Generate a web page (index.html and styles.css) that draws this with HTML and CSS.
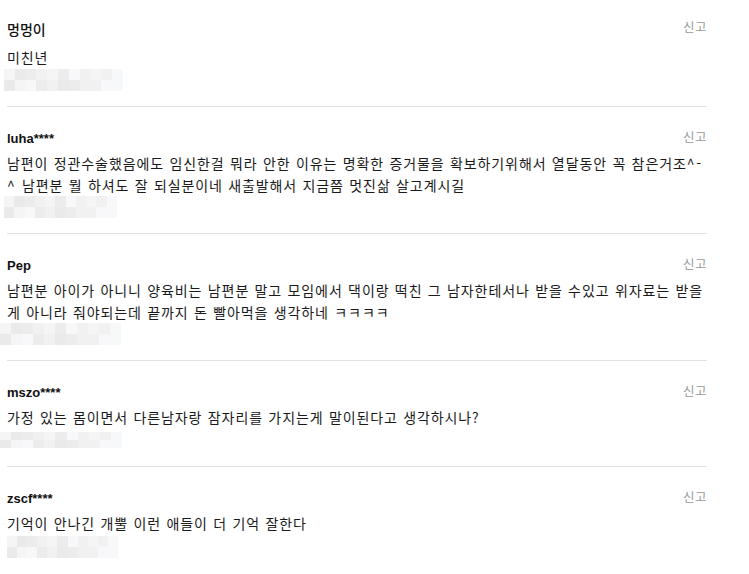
FILE: index.html
```html
<!DOCTYPE html>
<html lang="ko">
<head>
<meta charset="utf-8">
<title>댓글</title>
<link rel="stylesheet" href="styles.css">
</head>
<body>
<ul class="comments">
  <li class="comment first">
    <div class="head"><strong class="author">멍멍이</strong><button class="report">신고</button></div>
    <p class="text">미친년</p>
    <div class="mosaic m1"><span></span><span></span><span></span><span></span><span></span><span></span><span></span><span></span><span></span><span></span><span></span><span></span><span></span><span></span><span></span><span></span><span></span><span></span><span></span><span></span><span></span><span></span></div>
  </li>
  <li class="comment">
    <div class="head"><strong class="author">luha****</strong><button class="report">신고</button></div>
    <p class="text">남편이 정관수술했음에도 임신한걸 뭐라 안한 이유는 명확한 증거물을 확보하기위해서 열달동안 꼭 참은거조<span class="emo">^-^</span> 남편분 뭘 하셔도 잘 되실분이네 새출발해서 지금쯤 멋진삶 살고계시길</p>
    <div class="mosaic m2"><span></span><span></span><span></span><span></span><span></span><span></span><span></span><span></span><span></span><span></span><span></span><span></span><span></span><span></span><span></span><span></span><span></span><span></span><span></span><span></span><span></span><span></span></div>
  </li>
  <li class="comment">
    <div class="head"><strong class="author">Pep</strong><button class="report">신고</button></div>
    <p class="text">남편분 아이가 아니니 양육비는 남편분 말고 모임에서 댁이랑 떡친 그 남자한테서나 받을 수있고 위자료는 받을 게 아니라 줘야되는데 끝까지 돈 빨아먹을 생각하네 ㅋㅋㅋㅋ</p>
    <div class="mosaic m3"><span></span><span></span><span></span><span></span><span></span><span></span><span></span><span></span><span></span><span></span><span></span><span></span><span></span><span></span><span></span><span></span><span></span><span></span><span></span><span></span><span></span><span></span></div>
  </li>
  <li class="comment">
    <div class="head"><strong class="author">mszo****</strong><button class="report">신고</button></div>
    <p class="text">가정 있는 몸이면서 다른남자랑 잠자리를 가지는게 말이된다고 생각하시나?</p>
    <div class="mosaic m4"><span></span><span></span><span></span><span></span><span></span><span></span><span></span><span></span><span></span><span></span><span></span><span></span><span></span><span></span><span></span><span></span><span></span><span></span><span></span><span></span><span></span><span></span></div>
  </li>
  <li class="comment">
    <div class="head"><strong class="author">zscf****</strong><button class="report">신고</button></div>
    <p class="text">기억이 안나긴 개뿔 이런 애들이 더 기억 잘한다</p>
    <div class="mosaic m5"><span></span><span></span><span></span><span></span><span></span><span></span><span></span><span></span><span></span><span></span><span></span><span></span><span></span><span></span><span></span><span></span><span></span><span></span><span></span><span></span><span></span><span></span></div>
  </li>
</ul>
</body>
</html>
```
FILE: styles.css
```css
html, body {
  margin: 0;
  padding: 0;
  background: #fff;
}

body {
  font-family: "Noto Sans CJK KR", sans-serif;
  color: #222;
}

.comments {
  list-style: none;
  margin: 0 0 0 7px;
  padding: 0;
  width: 700px;
}

.comment {
  padding: 23px 0 15px;
  border-bottom: 1px solid #e2e2e2;
}

.comment:last-child {
  border-bottom: none;
}

.comment.first {
  padding-top: 20px;
  padding-bottom: 15.5px;
}

.head {
  display: flex;
  justify-content: space-between;
  align-items: flex-start;
  height: 18px;
}

.author {
  font-family: "Liberation Sans", "Noto Sans CJK KR", sans-serif;
  font-size: 13px;
  line-height: 18px;
  font-weight: bold;
  color: #111;
}

.first .author {
  font-family: "Noto Sans CJK KR", sans-serif;
  font-size: 14px;
  font-weight: 500;
}

.report {
  border: none;
  background: none;
  padding: 0;
  margin-top: -2px;
  font-family: "Noto Sans CJK KR", sans-serif;
  font-size: 12.5px;
  line-height: 18px;
  letter-spacing: 0.5px;
  color: #999;
  cursor: pointer;
}

.text {
  margin: 5px 0 0;
  font-size: 14px;
  line-height: 21.5px;
  letter-spacing: 0.9px;
  word-spacing: 0.6px;
  word-break: keep-all;
  color: #1a1a1a;
}

.emo {
  letter-spacing: 1.8px;
}

.first .text {
  margin-top: 9px;
}

.mosaic {
  display: grid;
  grid-template-columns: repeat(11, 1fr);
  grid-template-rows: 1fr 1fr;
  height: 22px;
}

.mosaic span {
  background: #f1f1f1;
}

.mosaic span:nth-child(3n) {
  background: #ececec;
}

.mosaic span:nth-child(4n+1) {
  background: #f5f5f5;
}

.mosaic span:nth-child(5n+2) {
  background: #eaeaea;
}

.mosaic span:nth-child(7n) {
  background: #f8f8fa;
}

.mosaic span:nth-child(11n) {
  background: #f7f8fa;
}

.m1 {
  width: 119px;
  margin-left: -3px;
}

.m2 {
  width: 113px;
  margin-left: -3px;
}

.m3 {
  width: 121px;
  margin-left: -7px;
}

.m4 {
  width: 122px;
  margin: 3px 0 3px -7px;
  height: 16px;
}

.m5 {
  width: 111px;
  margin-top: 1.5px;
}
```
